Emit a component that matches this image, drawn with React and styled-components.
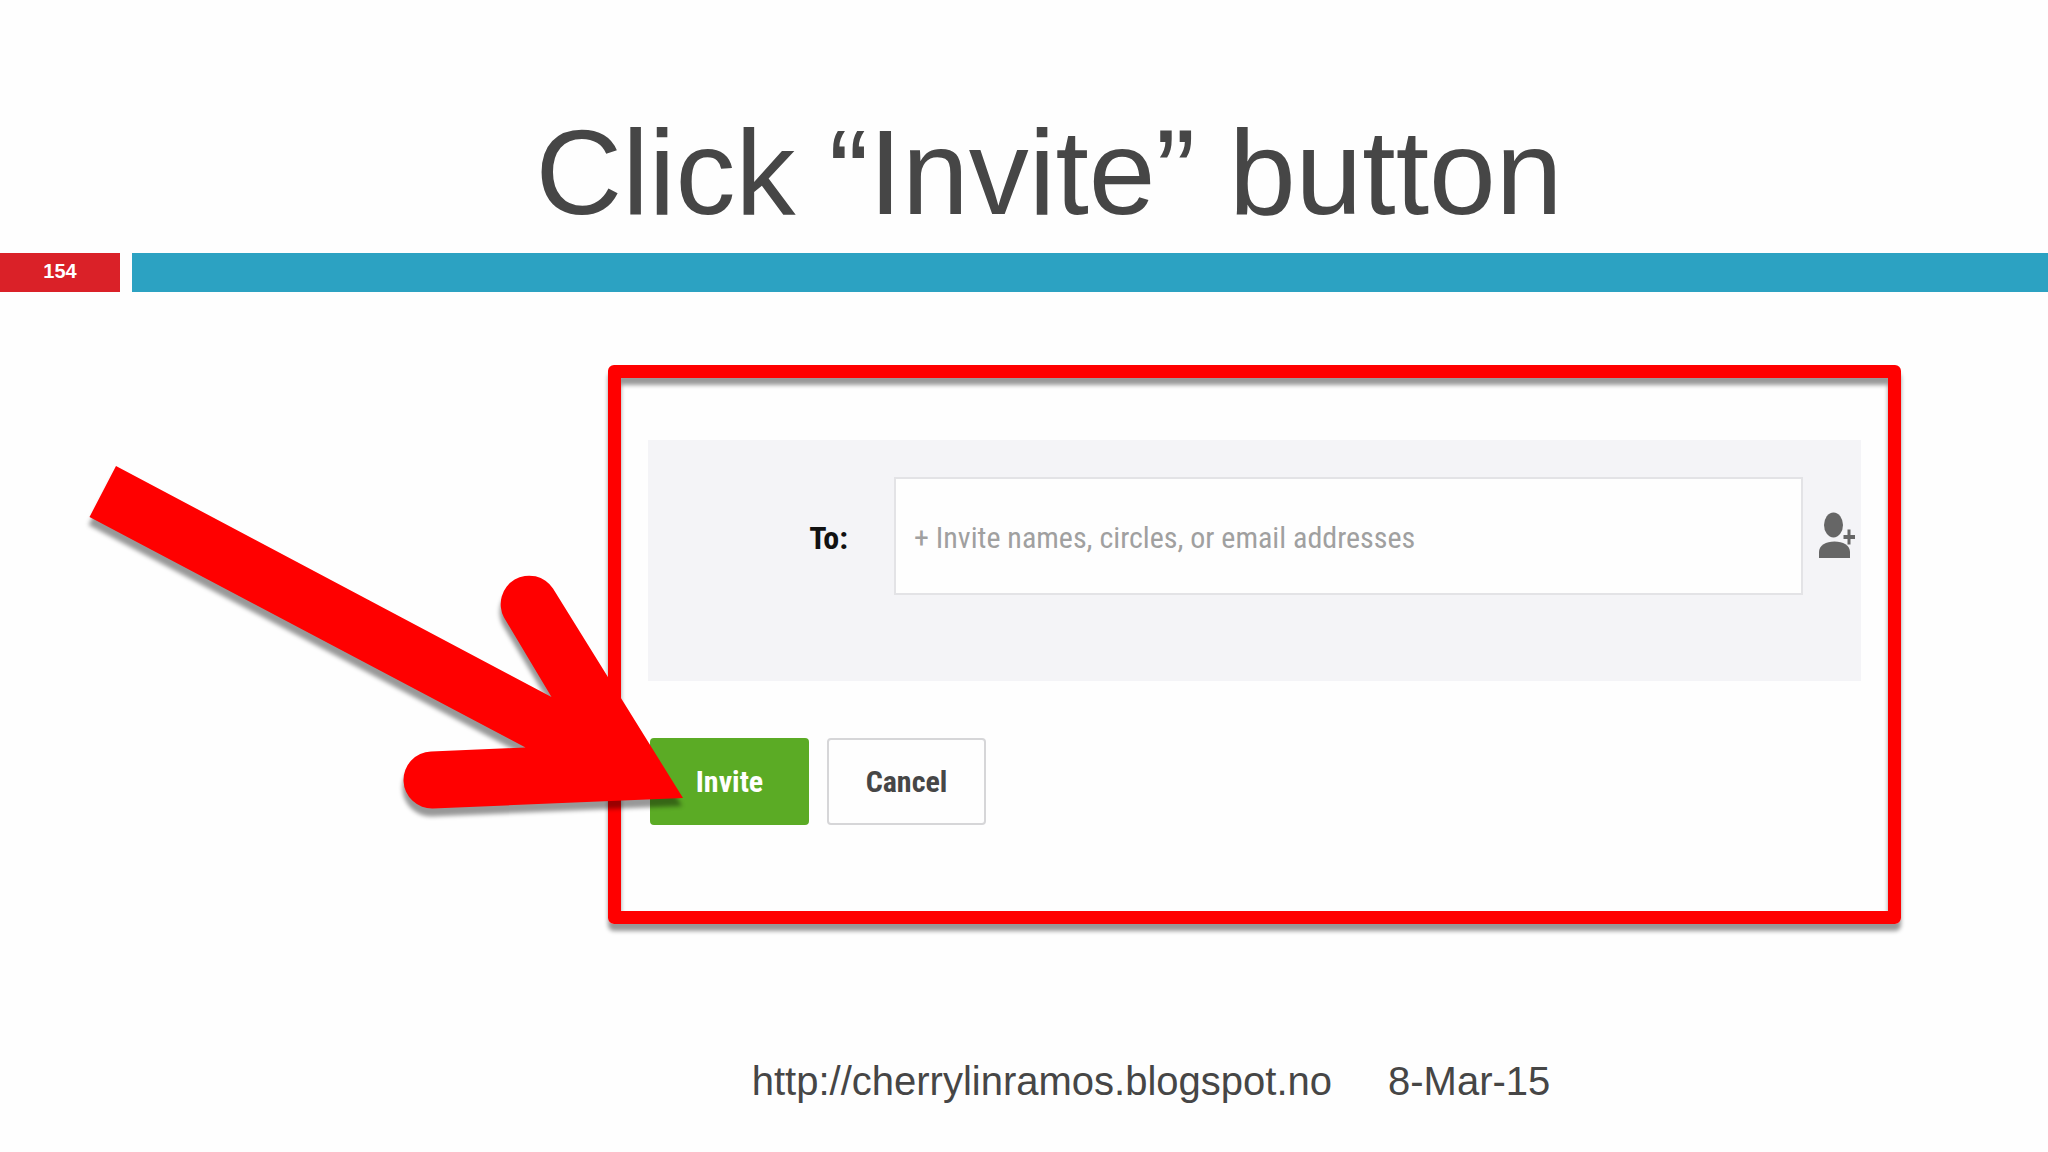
import styled, { createGlobalStyle } from "styled-components";

const InviteForm = () => {
  return (
    <FormStyle onSubmit={(e) => e.preventDefault()}>
      <RecipientPanel>
        <LabelStyle htmlFor="recipients">To:</LabelStyle>
        <InputStyle
          id="recipients"
          type="text"
          placeholder="+ Invite names, circles, or email addresses"
        />
        <AddPersonButton type="button" aria-label="Add people">
          <svg width="36" height="48" viewBox="0 0 36 48" fill="#666">
            <ellipse cx="14.500" cy="13" rx="9.500" ry="12.500" />
            <path d="M0 46V40C0 33.500 7 29.500 15.500 29.500S31 33.500 31 40V46Z" />
            <path d="M28.500 17.500H31.500V23H36V27H31.500V32.500H28.500V27H24.500V23H28.500Z" />
          </svg>
        </AddPersonButton>
      </RecipientPanel>
      <Actions>
        <ButtonStyle type="submit" $primary>
          Invite
        </ButtonStyle>
        <ButtonStyle type="button">Cancel</ButtonStyle>
      </Actions>
    </FormStyle>
  );
};

const App = () => {
  return (
    <>
      <GlobalStyle />
      <Slide>
        <Header>
          <TitleStyle>Click “Invite” button</TitleStyle>
        </Header>
        <Divider>
          <PageNumber>154</PageNumber>
          <DividerLine />
        </Divider>
        <Figure>
          <InviteForm />
          <Arrow viewBox="0 0 700 860" aria-hidden="true">
            <path d="M116 466L551.500 697L504 617.500A28.500 28.500 0 0 1 553 588.500L683 798L433 808.500A28.500 28.500 0 0 1 431 751.500L525.500 747.500L89.500 517Z" />
          </Arrow>
        </Figure>
        <Footer>
          <FooterLink href="http://cherrylinramos.blogspot.no">
            http://cherrylinramos.blogspot.no
          </FooterLink>
          <time dateTime="2015-03-08">8-Mar-15</time>
        </Footer>
      </Slide>
    </>
  );
};

const GlobalStyle = createGlobalStyle`
  * {
    box-sizing: border-box;
  }
  body {
    margin: 0;
    background: #fefefe;
    color: #464646;
    font-family: "Liberation Sans", Arial, sans-serif;
  }
`;

const Slide = styled.main`
  display: flex;
  flex-direction: column;
  min-height: 100vh;
`;

const Header = styled.header`
  padding: 112px 0 21px 50px;
  text-align: center;
`;

const TitleStyle = styled.h1`
  margin: 0;
  font-size: 120px;
  font-weight: normal;
  line-height: 120px;
`;

const Divider = styled.div`
  display: flex;
  gap: 12px;
  height: 39px;
`;

const PageNumber = styled.div`
  width: 120px;
  background: #da2128;
  color: #fff;
  font-size: 20px;
  font-weight: bold;
  line-height: 36px;
  text-align: center;
`;

const DividerLine = styled.div`
  flex: 1;
  background: #2ca2c2;
`;

const Figure = styled.section`
  position: relative;
  padding: 73px 147px 0 608px;
`;

/* lies over the form, its tip on the Invite button */
const Arrow = styled.svg`
  position: absolute;
  left: 0;
  top: -292px;
  width: 700px;
  height: 860px;
  fill: #f00;
  filter: drop-shadow(-1px 8px 2px rgba(0, 0, 0, 0.4));
  pointer-events: none;
`;

const FormStyle = styled.form`
  padding: 62px 27px 86px;
  border: 13px solid #f00;
  border-radius: 6px;
  box-shadow:
    0 7px 4px rgba(0, 0, 0, 0.4),
    inset 0 7px 4px rgba(0, 0, 0, 0.4);
  font-family: "Roboto Condensed", Roboto, sans-serif;
`;

const RecipientPanel = styled.div`
  display: flex;
  align-items: center;
  height: 241px;
  padding: 0 6px 50px 0;
  background: #f4f4f7;
`;

const LabelStyle = styled.label`
  width: 200px;
  margin-right: 46px;
  padding-top: 4px;
  color: #111;
  font-size: 32px;
  font-weight: bold;
  text-align: right;
`;

const InputStyle = styled.input`
  flex: 1;
  min-width: 0;
  height: 118px;
  padding: 4px 18px 0;
  border: 2px solid #e3e3e6;
  border-radius: 0;
  background: #fefefe;
  color: #464646;
  font-family: inherit;
  font-size: 30px;
  &::placeholder {
    color: #a0a0a0;
    opacity: 1;
  }
`;

const AddPersonButton = styled.button`
  display: flex;
  margin-left: 16px;
  padding: 0;
  border: 0;
  background: none;
`;

const Actions = styled.div`
  display: flex;
  gap: 18px;
  padding: 57px 0 0 2px;
`;

const ButtonStyle = styled.button`
  width: 159px;
  height: 87px;
  padding: 0;
  border: 2px solid ${({ $primary }) => ($primary ? "#5bab25" : "#d6d6d8")};
  border-radius: 4px;
  background: ${({ $primary }) => ($primary ? "#5bab25" : "#fefefe")};
  color: ${({ $primary }) => ($primary ? "#fff" : "#464646")};
  font-family: inherit;
  font-size: 30px;
  font-weight: bold;
`;

const Footer = styled.footer`
  display: flex;
  justify-content: center;
  gap: 56px;
  padding: 137px 0 51px 254px;
  font-size: 40px;
  line-height: 40px;
`;

const FooterLink = styled.a`
  color: inherit;
  text-decoration: none;
`;

export default App;
